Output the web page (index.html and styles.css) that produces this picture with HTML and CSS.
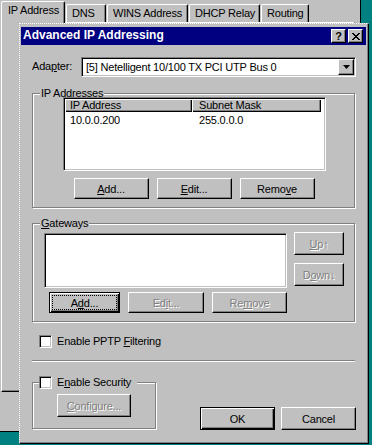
FILE: index.html
```html
<!DOCTYPE html>
<html lang="en">
<head>
    <meta charset="UTF-8" />
    <meta name="viewport" content="width=device-width, initial-scale=1" />
    <title>Advanced IP Addressing</title>
    <link rel="stylesheet" href="styles.css">
</head>
<body>
<div class="desktop">
    <div class="sheet">
        <div class="tabs">
            <div class="tab active tab-ip">IP Address</div>
            <div class="tab tab-dns">DNS</div>
            <div class="tab tab-wins">WINS Address</div>
            <div class="tab tab-dhcp">DHCP Relay</div>
            <div class="tab tab-routing">Routing</div>
        </div>
        <div class="tab-panel"></div>
    </div>

    <div class="dialog">
        <div class="titlebar">
            <span class="title">Advanced IP Addressing</span>
            <div class="caption-btns">
                <button class="cap-btn">?</button>
                <button class="cap-btn">
                    <svg width="8" height="7" viewBox="0 0 8 7"><path d="M0 0h2v1H0zM6 0h2v1H6zM1 1h2v1H1zM5 1h2v1H5zM2 2h4v1H2zM3 3h2v1H3zM2 4h4v1H2zM1 5h2v1H1zM5 5h2v1H5zM0 6h2v1H0zM6 6h2v1H6z"/></svg>
                </button>
            </div>
        </div>

        <div class="dlg-body">
            <div class="adapter-row">
                <label class="adapter-label">Ada<u>p</u>ter:</label>
                <div class="combo">
                    <span class="combo-text">[5] Netelligent 10/100 TX PCI UTP Bus 0</span>
                    <span class="combo-btn">
                        <svg width="7" height="4" viewBox="0 0 7 4"><path d="M0 0h7L3.5 4z"/></svg>
                    </span>
                </div>
            </div>

            <fieldset class="group ip-group">
                <legend>IP Add<u>r</u>esses</legend>
                <div class="listview">
                    <div class="lv-head">
                        <div class="lv-col">IP Address</div>
                        <div class="lv-col col-mask">Subnet Mask</div>
                    </div>
                    <div class="lv-row">
                        <div class="lv-cell">10.0.0.200</div>
                        <div class="lv-cell col-mask">255.0.0.0</div>
                    </div>
                </div>
                <div class="btn-row ip-btns">
                    <button class="btn"><u>A</u>dd...</button>
                    <button class="btn"><u>E</u>dit...</button>
                    <button class="btn">Remo<u>v</u>e</button>
                </div>
            </fieldset>

            <fieldset class="group gw-group">
                <legend><u>G</u>ateways</legend>
                <div class="gw-grid">
                    <div class="listbox"></div>
                    <div class="updown">
                        <button class="btn btn-side" disabled><u>U</u>p&#8593;</button>
                        <button class="btn btn-side" disabled>D<u>o</u>wn&#8595;</button>
                    </div>
                    <div class="btn-row gw-btns">
                        <button class="btn btn-focus btn-narrow">A<u>d</u>d...</button>
                        <button class="btn btn-wide" disabled>Ed<u>i</u>t...</button>
                        <button class="btn" disabled>Re<u>m</u>ove</button>
                    </div>
                </div>
            </fieldset>

            <label class="check pptp">
                <span class="checkbox"></span>
                <span>Enable PPTP <u>F</u>iltering</span>
            </label>

            <hr class="sep">

            <div class="bottom-row">
                <fieldset class="group sec-group">
                    <legend>
                        <label class="check">
                            <span class="checkbox"></span>
                            <span>E<u>n</u>able Security</span>
                        </label>
                    </legend>
                    <button class="btn btn-config" disabled><u>C</u>onfigure...</button>
                </fieldset>
                <div class="actions">
                    <button class="btn btn-default">OK</button>
                    <button class="btn btn-big">Cancel</button>
                </div>
            </div>
        </div>
    </div>
</div>
</body>
</html>
```

FILE: styles.css
```css
* {
    box-sizing: border-box;
}
body {
    margin: 0;
    width: 372px;
    height: 445px;
    overflow: hidden;
    background: #008080;
    font-family: "Liberation Sans", Arial, sans-serif;
    font-size: 11px;
    letter-spacing: -0.2px;
    color: #000;
}
.desktop {
    position: relative;
    width: 372px;
    height: 445px;
}

/* property sheet behind the dialog */
.sheet {
    position: absolute;
    left: 0;
    top: 0;
    width: 361px;
    height: 432px;
    background: #c0c0c0;
    border-right: 1px solid #000;
    border-bottom: 1px solid #000;
}
.tabs {
    display: flex;
    align-items: flex-end;
    gap: 1px;
    height: 22px;
    padding-left: 1px;
}
.tab {
    height: 18px;
    padding: 2px 0 0 5px;
    border: 1px solid #fff;
    border-bottom: none;
    border-right-color: #000;
    border-radius: 2px 2px 0 0;
    box-shadow: inset -1px 0 #808080;
    line-height: 13px;
    white-space: nowrap;
}
.tab.active {
    position: relative;
    z-index: 1;
    height: 22px;
    margin-bottom: -1px;
    padding-left: 6px;
    background: #c0c0c0;
}
.tab-ip { width: 64px; }
.tab-dns { width: 40px; }
.tab-wins { width: 81px; }
.tab-dhcp { width: 71px; }
.tab-routing { width: 48px; }
.tab-panel {
    width: 354px;
    height: 370px;
    margin-left: 1px;
    border: 1px solid #fff;
    border-right-color: #000;
    border-bottom-color: #000;
    box-shadow: inset -1px -1px #808080;
}

/* dialog window */
.dialog {
    position: absolute;
    left: 19px;
    top: 23px;
    width: 350px;
    height: 421px;
    background: #c0c0c0;
    border-top: 1px dotted #fff;
    border-left: 1px dotted #fff;
    border-right: 1px solid #000;
    border-bottom: 1px solid #000;
    box-shadow: inset -1px -1px #808080;
    padding: 3px 2px 1px 1px;
}
.titlebar {
    display: flex;
    align-items: center;
    height: 18px;
    padding: 0 3px 0 2px;
    background: #000080;
    color: #fff;
}
.title {
    flex: 1;
    font-size: 12px;
    font-weight: bold;
    letter-spacing: 0;
    line-height: 14px;
    padding-bottom: 2px;
}
.caption-btns {
    display: flex;
    gap: 2px;
}
.cap-btn {
    display: flex;
    align-items: center;
    justify-content: center;
    width: 15px;
    height: 14px;
    padding: 0;
    background: #c0c0c0;
    border: 1px solid;
    border-color: #fff #000 #000 #fff;
    box-shadow: inset -1px -1px #808080;
    font: bold 11px "Liberation Sans", Arial, sans-serif;
    color: #000;
}

.dlg-body {
    padding: 0 11px;
}
u {
    text-decoration-thickness: 1px;
    text-underline-offset: 1px;
}

/* adapter combo */
.adapter-row {
    display: flex;
    align-items: center;
    height: 20px;
    margin-top: 12px;
}
.adapter-label {
    width: 49px;
    line-height: 13px;
    padding-bottom: 1px;
}
.combo {
    flex: 1;
    display: flex;
    align-items: center;
    height: 20px;
    margin-right: -1px;
    padding-left: 4px;
    background: #fff;
    border: 1px solid;
    border-color: #808080 #fff #fff #808080;
    box-shadow: inset 1px 1px #000, inset -1px -1px #c0c0c0;
}
.combo-text {
    flex: 1;
    white-space: nowrap;
}
.combo-btn {
    display: flex;
    align-items: center;
    justify-content: center;
    width: 16px;
    height: 16px;
    margin-right: 1px;
    background: #c0c0c0;
    border: 1px solid;
    border-color: #fff #000 #000 #fff;
    box-shadow: inset -1px -1px #808080;
}

/* group boxes */
.group {
    margin: 0;
    padding: 0;
    min-width: 0;
    border: 1px solid #808080;
    box-shadow: inset 1px 1px #fff, 1px 1px #fff;
}
.group legend {
    margin-left: 7px;
    padding: 0 1px;
    line-height: 11px;
    background: #c0c0c0;
}
.ip-group {
    margin-top: 11px;
}
.gw-group {
    margin-top: 10px;
}

/* list view */
.listview {
    height: 74px;
    margin: -2px 28px 0 30px;
    background: #fff;
    border: 1px solid;
    border-color: #808080 #fff #fff #808080;
    box-shadow: inset 1px 1px #000, inset -1px -1px #c0c0c0;
    padding: 1px;
}
.lv-head,
.lv-row {
    display: grid;
    grid-template-columns: 127px 129px;
}
.lv-col {
    height: 13px;
    padding-left: 5px;
    line-height: 12px;
    background: #c0c0c0;
    box-shadow: inset 1px 1px #fff, inset -1px -1px #000, inset -2px -2px #808080;
}
.lv-cell {
    padding: 2px 0 0 5px;
    line-height: 13px;
}
.col-mask {
    padding-left: 7px;
}

/* buttons */
.btn {
    width: 75px;
    height: 21px;
    padding: 0;
    font: inherit;
    letter-spacing: inherit;
    color: #000;
    background: #c0c0c0;
    border: 1px solid;
    border-color: #fff #000 #000 #fff;
    box-shadow: inset -1px -1px #808080;
}
.btn:disabled {
    color: #808080;
    text-shadow: 1px 1px 0 #fff;
}
.btn-default,
.btn-focus {
    border-color: #000;
    box-shadow: inset 1px 1px #fff, inset -1px -1px #000, inset -2px -2px #808080;
}
.btn-focus {
    outline: 1px dotted #000;
    outline-offset: -4px;
}
.btn-row {
    display: flex;
}
.ip-btns {
    justify-content: center;
    gap: 8px;
    margin: 7px 0 8px;
    padding-left: 1px;
}

/* gateways */
.gw-grid {
    display: grid;
    grid-template-columns: 243px 50px;
    column-gap: 7px;
    row-gap: 4px;
    margin: 3px 0 8px 11px;
}
.listbox {
    height: 55px;
    margin-top: 1px;
    background: #fff;
    border: 1px solid;
    border-color: #808080 #fff #fff #808080;
    box-shadow: inset 1px 1px #000, inset -1px -1px #c0c0c0;
}
.updown {
    display: flex;
    flex-direction: column;
    gap: 8px;
}
.btn-side {
    width: 50px;
    height: 23px;
}
.gw-btns {
    justify-content: flex-end;
    gap: 8px;
}
.btn-narrow {
    width: 71px;
}
.btn-wide {
    width: 76px;
}

/* check boxes */
.check {
    display: flex;
    align-items: center;
    gap: 5px;
    line-height: 13px;
}
.checkbox {
    width: 13px;
    height: 13px;
    background: #fff;
    border: 1px solid;
    border-color: #808080 #fff #fff #808080;
    box-shadow: inset 1px 1px #000, inset -1px -1px #c0c0c0;
}
.pptp {
    margin: 13px 0 0 7px;
}
.sep {
    height: 0;
    margin: 12px 0 0;
    border: none;
    border-top: 1px solid #808080;
    border-bottom: 1px solid #fff;
}

/* security + ok/cancel */
.bottom-row {
    display: flex;
    align-items: flex-start;
    margin-top: 14px;
}
.sec-group {
    width: 124px;
}
.sec-group legend {
    margin-left: 6px;
    padding: 0 6px 0 0;
    line-height: 13px;
}
.btn-config {
    width: 74px;
    height: 23px;
    margin: 5px 0 11px 24px;
}
.actions {
    display: flex;
    gap: 6px;
    margin: 31px -1px 0 auto;
}
.btn-default,
.btn-big {
    height: 23px;
}
```
